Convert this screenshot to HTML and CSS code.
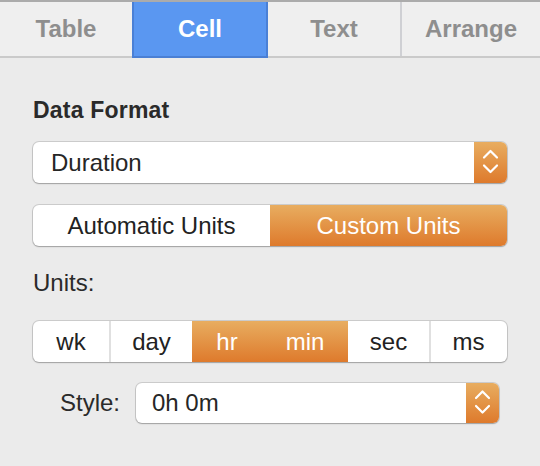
FILE: index.html
```html
<!DOCTYPE html>
<html>
<head>
<meta charset="utf-8">
<link rel="stylesheet" href="styles.css">
</head>
<body>
<div class="tabbar">
  <div class="tab">Table</div>
  <div class="tab active">Cell</div>
  <div class="tab">Text</div>
  <div class="tab last">Arrange</div>
</div>
<div class="panel">
  <div class="heading">Data Format</div>
  <div class="popup wide">
    <div class="popup-value">Duration</div>
    <div class="stepper">
      <svg width="33" height="41" viewBox="0 0 33 41"><path d="M10 15.5 L16.5 9 L23 15.5 M10 23.5 L16.5 30 L23 23.5" fill="none" stroke="#fff" stroke-width="2.2" stroke-linecap="round" stroke-linejoin="round"/></svg>
    </div>
  </div>
  <div class="seg units-mode">
    <div class="seg-item w-auto">Automatic Units</div>
    <div class="seg-item on w-custom">Custom Units</div>
  </div>
  <div class="label">Units:</div>
  <div class="seg unit-list">
    <div class="seg-item w-wk">wk</div>
    <div class="seg-item div w-day">day</div>
    <div class="seg-item on w-hr">hr</div>
    <div class="seg-item on w-min">min</div>
    <div class="seg-item w-sec">sec</div>
    <div class="seg-item div w-ms">ms</div>
  </div>
  <div class="style-row">
    <div class="style-label">Style:</div>
    <div class="popup narrow">
      <div class="popup-value small-pad">0h 0m</div>
      <div class="stepper">
        <svg width="33" height="40" viewBox="0 0 33 40"><path d="M10 15 L16.5 8.5 L23 15 M10 23 L16.5 29.5 L23 23" fill="none" stroke="#fff" stroke-width="2.2" stroke-linecap="round" stroke-linejoin="round"/></svg>
      </div>
    </div>
  </div>
</div>
</body>
</html>
```
FILE: styles.css
```css
html, body {
  margin: 0;
  padding: 0;
}
body {
  background: #ebebeb;
  font-family: "Liberation Sans", Arial, sans-serif;
  color: #262626;
  width: 540px;
  height: 466px;
  overflow: hidden;
}
.tabbar {
  display: flex;
  height: 54px;
  border-top: 2px solid #ababab;
  border-bottom: 2px solid #cacaca;
  background: #efefef;
}
.tab {
  width: 132px;
  display: flex;
  align-items: center;
  justify-content: center;
  font-weight: bold;
  font-size: 24px;
  color: #8e8e8e;
  box-sizing: border-box;
}
.tab.active {
  width: 136px;
  background: #5a97f1;
  color: #fff;
  border-left: 2px solid #4a80d6;
  border-right: 2px solid #4a80d6;
  border-bottom: 2px solid #4a7fd4;
  margin-bottom: -2px;
  height: 56px;
}
.tab.last {
  width: 140px;
  border-left: 2px solid #cfd0d4;
}
.panel {
  padding: 38px 33px 0 33px;
}
.heading {
  font-size: 23px;
  line-height: 28px;
  font-weight: bold;
  color: #2a2a2a;
  letter-spacing: 0.2px;
}
.popup {
  display: flex;
  background: #fff;
  border-radius: 6px;
  box-shadow: 0 0 0 1px rgba(0,0,0,0.13), 0 1px 1.5px rgba(0,0,0,0.22);
  overflow: hidden;
}
.popup.wide {
  margin-top: 18px;
  height: 41px;
}
.popup-value {
  flex: 1;
  display: flex;
  align-items: center;
  padding-left: 18px;
  font-size: 24px;
}
.popup-value.small-pad {
  padding-left: 16px;
}
.stepper {
  width: 33px;
  background: linear-gradient(#e8ad60, #de7a2c);
  display: flex;
}
.seg {
  display: flex;
  height: 41px;
  background: #fff;
  border-radius: 6px;
  box-shadow: 0 0 0 1px rgba(0,0,0,0.13), 0 1px 1.5px rgba(0,0,0,0.22);
  overflow: hidden;
}
.units-mode {
  margin-top: 22px;
}
.seg-item {
  display: flex;
  align-items: center;
  justify-content: center;
  font-size: 24px;
  color: #222;
  box-sizing: border-box;
}
.seg-item.on {
  background: linear-gradient(#e8ad60, #de7a2c);
  color: #fff;
}
.seg-item.div {
  border-left: 2px solid #e0e0e0;
}
.w-auto { width: 237px; }
.w-custom { width: 237px; }
.label {
  margin-top: 23px;
  font-size: 24px;
  line-height: 28px;
  color: #2a2a2a;
}
.unit-list {
  margin-top: 24px;
}
.w-wk { width: 76px; }
.w-day { width: 83px; }
.w-hr { width: 70px; }
.w-min { width: 86px; }
.w-sec { width: 81px; }
.w-ms { width: 77px; }
.style-row {
  display: flex;
  align-items: center;
  margin-top: 21px;
  padding-left: 27px;
}
.style-label {
  width: 76px;
  font-size: 24px;
  color: #2a2a2a;
}
.popup.narrow {
  width: 363px;
  height: 40px;
}
```
